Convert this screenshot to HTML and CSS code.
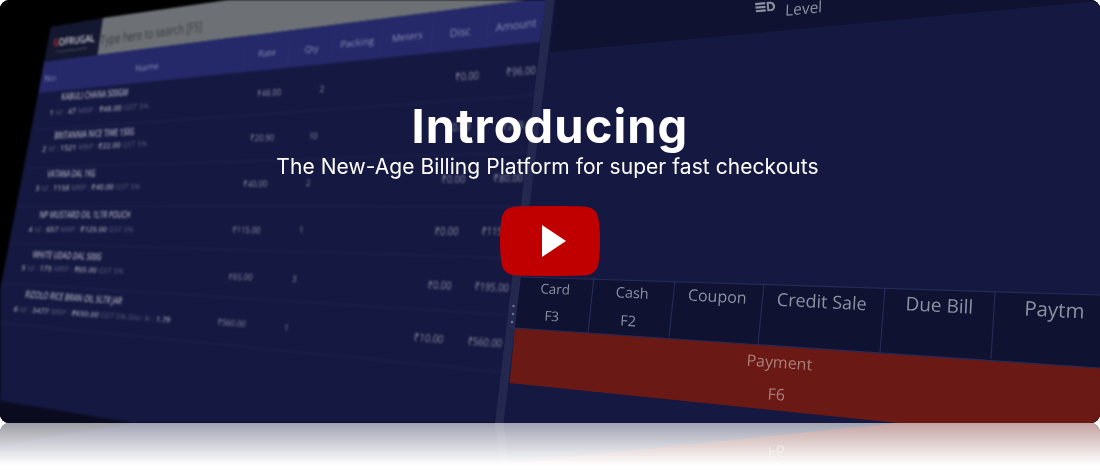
FILE: index.html
```html
<!DOCTYPE html>
<html lang="en">
<head>
<meta charset="utf-8">
<title>Introducing</title>
<link rel="stylesheet" href="styles.css">
</head>
<body>
<section class="banner">
  <svg class="shot" viewBox="0 0 1100 423" width="1100" height="423" aria-hidden="true">
    <rect class="f-black" width="1100" height="423"/>
    <polygon class="f-shadow" points="0,395 140,423 0,423"/>
    <g class="blur-left">
      <polygon class="f-panel" points="51,27 103,18 228,0 560,0 500,423 133,423 0,401 0,290"/>
      <polygon class="f-logo" points="51,27 103,18 97.5,55 44,62"/>
      <polygon class="f-grey" points="103,18 228,0 528,0 489,5 97.5,55"/>
      <polygon class="f-head" points="44,62 97.5,55 489,5 528,0 548,0 540,42 38.6,93"/>
      <g class="lines">
        <line x1="62" y1="62" x2="57" y2="88"/><line x1="246" y1="42" x2="242" y2="72"/>
        <line x1="291" y1="37" x2="287" y2="67"/><line x1="335" y1="31" x2="331" y2="62"/>
        <line x1="383" y1="25" x2="379" y2="57"/><line x1="434" y1="19" x2="430" y2="52"/>
        <line x1="490" y1="6" x2="486" y2="47"/>
      </g>
      <g class="lines rows">
        <line x1="35" y1="130" x2="537" y2="95"/><line x1="28" y1="168" x2="530" y2="152"/>
        <line x1="19" y1="206" x2="523" y2="207"/><line x1="9" y1="243" x2="509" y2="258"/>
        <line x1="1" y1="283" x2="509" y2="315"/><line x1="0" y1="323" x2="502" y2="372"/>
      </g>
      <text class="t logo-t" text-anchor="middle" transform="translate(74 44) rotate(-7) skewX(-6)" textLength="42" lengthAdjust="spacingAndGlyphs"><tspan class="logo-g">G</tspan>OFRUGAL</text>
      <text class="t logo-s" text-anchor="middle" transform="translate(72 51) rotate(-7)">Community Edition</text>
      <text class="t search" text-anchor="middle" transform="translate(151 38) rotate(-8) skewX(-10)" textLength="103" lengthAdjust="spacingAndGlyphs">Type here to search [F5]</text>
      <g class="head-labels">
        <text class="t hl hl-xs" text-anchor="middle" transform="translate(50 81) rotate(-7) skewX(-10)">No</text>
        <text class="t hl hl-xs" text-anchor="middle" transform="translate(147 70) rotate(-7) skewX(-10)">Name</text>
        <text class="t hl hl-xs" text-anchor="middle" transform="translate(267 56) rotate(-7) skewX(-10)">Rate</text>
        <text class="t hl hl-xs" text-anchor="middle" transform="translate(311.5 52) rotate(-7) skewX(-10)">Qty</text>
        <text class="t hl hl-s" text-anchor="middle" transform="translate(357 46) rotate(-7) skewX(-10)">Packing</text>
        <text class="t hl hl-s" text-anchor="middle" transform="translate(407 40) rotate(-7) skewX(-10)">Meters</text>
        <text class="t hl" text-anchor="middle" transform="translate(460 36) rotate(-7) skewX(-10)">Disc</text>
        <text class="t hl" text-anchor="middle" transform="translate(516 29) rotate(-7) skewX(-10)">Amount</text>
      </g>
      <g class="row-text">
        <text class="t name" text-anchor="middle" transform="translate(94.5 98) rotate(-4) skewX(-10)" textLength="67" lengthAdjust="spacingAndGlyphs">KABULI CHANA 500GM</text>
        <text class="t sub" text-anchor="middle" transform="translate(99 112) rotate(-4) skewX(-10)" textLength="100" lengthAdjust="spacingAndGlyphs">1   <tspan class="dim">Id :</tspan> 47  <tspan class="dim">MRP :</tspan> ₹48.00  <tspan class="dim">GST 5%</tspan></text>
        <text class="t val val-s" text-anchor="middle" transform="translate(269 96) rotate(-4) skewX(-6) scale(.85 1)">₹48.00</text>
        <text class="t val val-s" text-anchor="middle" transform="translate(322 92) rotate(-4) skewX(-6) scale(.85 1)">2</text>
        <text class="t val" text-anchor="middle" transform="translate(467 80) rotate(-4) skewX(-6) scale(.85 1)">₹0.00</text>
        <text class="t val" text-anchor="middle" transform="translate(521 75) rotate(-4) skewX(-6) scale(.85 1)">₹96.00</text>

        <text class="t name" text-anchor="middle" transform="translate(94 137) rotate(-3) skewX(-10)" textLength="80" lengthAdjust="spacingAndGlyphs">BRITANNIA NICE TIME 150G</text>
        <text class="t sub" text-anchor="middle" transform="translate(94.5 149) rotate(-3) skewX(-10)" textLength="105" lengthAdjust="spacingAndGlyphs">2   <tspan class="dim">Id :</tspan> 1521  <tspan class="dim">MRP :</tspan> ₹22.00  <tspan class="dim">GST 5%</tspan></text>
        <text class="t val val-s" text-anchor="middle" transform="translate(262 141) rotate(-2) skewX(-6) scale(.85 1)">₹20.90</text>
        <text class="t val val-s" text-anchor="middle" transform="translate(313 139) rotate(-2) skewX(-6) scale(.85 1)">10</text>
        <text class="t val" text-anchor="middle" transform="translate(458 131) rotate(-2) skewX(-6) scale(.85 1)">₹0.00</text>
        <text class="t val" text-anchor="middle" transform="translate(519 129) rotate(-2) skewX(-6) scale(.85 1)">₹209.00</text>

        <text class="t name" text-anchor="middle" transform="translate(71 177) rotate(-1) skewX(-10)" textLength="48" lengthAdjust="spacingAndGlyphs">VATANA DAL 1KG</text>
        <text class="t sub" text-anchor="middle" transform="translate(87.5 190) rotate(-1) skewX(-10)" textLength="105" lengthAdjust="spacingAndGlyphs">3   <tspan class="dim">Id :</tspan> 1158  <tspan class="dim">MRP :</tspan> ₹40.00  <tspan class="dim">GST 5%</tspan></text>
        <text class="t val val-s" text-anchor="middle" transform="translate(255 187) rotate(-1) skewX(-6) scale(.85 1)">₹40.00</text>
        <text class="t val val-s" text-anchor="middle" transform="translate(308 186) rotate(-1) skewX(-6) scale(.85 1)">2</text>
        <text class="t val" text-anchor="middle" transform="translate(453 183) rotate(-1) skewX(-6) scale(.85 1)">₹0.00</text>
        <text class="t val" text-anchor="middle" transform="translate(508 182) rotate(-1) skewX(-6) scale(.85 1)">₹80.00</text>

        <text class="t name" text-anchor="middle" transform="translate(84.5 218) rotate(0) skewX(-10)" textLength="91" lengthAdjust="spacingAndGlyphs">NP MUSTARD OIL 1LTR POUCH</text>
        <text class="t sub" text-anchor="middle" transform="translate(80.5 232) rotate(0) skewX(-10)" textLength="105" lengthAdjust="spacingAndGlyphs">4   <tspan class="dim">Id :</tspan> 657  <tspan class="dim">MRP :</tspan> ₹125.00  <tspan class="dim">GST 5%</tspan></text>
        <text class="t val val-s" text-anchor="middle" transform="translate(246 233) rotate(1) skewX(-6) scale(.85 1)">₹115.00</text>
        <text class="t val val-s" text-anchor="middle" transform="translate(301 233) rotate(1) skewX(-6) scale(.85 1)">1</text>
        <text class="t val" text-anchor="middle" transform="translate(446 235) rotate(1) skewX(-6) scale(.85 1)">₹0.00</text>
        <text class="t val" text-anchor="middle" transform="translate(498 235) rotate(1) skewX(-6) scale(.85 1)">₹115.00</text>

        <text class="t name" text-anchor="middle" transform="translate(66.5 259) rotate(2) skewX(-10)" textLength="69" lengthAdjust="spacingAndGlyphs">WHITE UDAD DAL 500G</text>
        <text class="t sub" text-anchor="middle" transform="translate(72 272) rotate(2) skewX(-10)" textLength="102" lengthAdjust="spacingAndGlyphs">5   <tspan class="dim">Id :</tspan> 175  <tspan class="dim">MRP :</tspan> ₹65.00  <tspan class="dim">GST 5%</tspan></text>
        <text class="t val val-s" text-anchor="middle" transform="translate(240 280) rotate(2) skewX(-6) scale(.85 1)">₹65.00</text>
        <text class="t val val-s" text-anchor="middle" transform="translate(294 282) rotate(2) skewX(-6) scale(.85 1)">3</text>
        <text class="t val" text-anchor="middle" transform="translate(439 289) rotate(2) skewX(-6) scale(.85 1)">₹0.00</text>
        <text class="t val" text-anchor="middle" transform="translate(491 291) rotate(2) skewX(-6) scale(.85 1)">₹195.00</text>

        <text class="t name" text-anchor="middle" transform="translate(73 301) rotate(4) skewX(-10)" textLength="97" lengthAdjust="spacingAndGlyphs">RIZOLO RICE BRAN OIL 5LTR JAR</text>
        <text class="t sub" text-anchor="middle" transform="translate(91.5 317) rotate(4) skewX(-10)" textLength="157" lengthAdjust="spacingAndGlyphs">6   <tspan class="dim">Id :</tspan> 3477  <tspan class="dim">MRP :</tspan> ₹650.00  <tspan class="dim">GST 5%  Disc  % :</tspan> 1.79</text>
        <text class="t val val-s" text-anchor="middle" transform="translate(231 326) rotate(4) skewX(-6) scale(.85 1)">₹560.00</text>
        <text class="t val val-s" text-anchor="middle" transform="translate(286 331) rotate(4) skewX(-6) scale(.85 1)">1</text>
        <text class="t val" text-anchor="middle" transform="translate(428 342) rotate(4) skewX(-6) scale(.85 1)">₹10.00</text>
        <text class="t val" text-anchor="middle" transform="translate(484 346) rotate(4) skewX(-6) scale(.85 1)">₹560.00</text>
      </g>
    </g>
    <g class="blur-right">
      <polygon class="f-right" points="552,0 1100,0 1100,423 500,423"/>
      <polygon class="f-dark" points="550,52 1087,2 1100,2 1100,0 556,0"/>
      <polygon class="f-strip" points="545.4,0 554.4,0 503.5,423 495,423"/>
      <g class="dots"><circle cx="513.5" cy="306" r="1.3"/><circle cx="513" cy="314" r="1.3"/><circle cx="512" cy="322" r="1.3"/></g>
      <polygon class="f-dark" points="521,277 1100,295 1100,368 515,328"/>
      <polygon class="f-red" points="515,328 1100,368 1100,423 898,423 509.5,383"/>
      <g class="lines bt">
        <line x1="521" y1="277" x2="1100" y2="295"/><line x1="515" y1="328" x2="1100" y2="368"/>
        <line x1="594" y1="277" x2="588" y2="333"/><line x1="675" y1="281" x2="669" y2="337"/>
        <line x1="764" y1="283" x2="758" y2="344"/><line x1="885" y1="287" x2="880" y2="352"/>
        <line x1="995" y1="292" x2="991" y2="359"/>
      </g>
      <g class="level-icon" transform="translate(755 2) rotate(-5)">
        <rect x="0" y="1" width="10" height="2.2"/><rect x="0" y="4.6" width="10" height="2.2"/><rect x="0" y="8.2" width="10" height="2.2"/>
        <path d="M11.5 1h3.500a4.700 4.700 0 0 1 0 9.400h-3.500zM13.500 3v5.500h1.200a2.700 2.700 0 0 0 0-5.500z" fill-rule="evenodd"/>
      </g>
      <text class="t bt-t level" text-anchor="middle" transform="translate(803.5 14) rotate(-6) skewX(-8)">Level</text>
      <text class="t bt-t s14" text-anchor="middle" transform="translate(555 294) rotate(3)">Card</text>
      <text class="t bt-t s14" text-anchor="middle" transform="translate(551.5 321) rotate(3)">F3</text>
      <text class="t bt-t s15" text-anchor="middle" transform="translate(632 298) rotate(3)">Cash</text>
      <text class="t bt-t s15" text-anchor="middle" transform="translate(628 326) rotate(3)">F2</text>
      <text class="t bt-t s16" text-anchor="middle" transform="translate(717 302) rotate(3)">Coupon</text>
      <text class="t bt-t s18" text-anchor="middle" transform="translate(821.5 308) rotate(3)">Credit Sale</text>
      <text class="t bt-t s19" text-anchor="middle" transform="translate(939 312) rotate(3)">Due Bill</text>
      <text class="t bt-t s20" text-anchor="middle" transform="translate(1054 317) rotate(3)">Paytm</text>
      <text class="t red-t" text-anchor="middle" transform="translate(779 368) rotate(4)">Payment</text>
      <text class="t red-t" text-anchor="middle" transform="translate(776 400) rotate(4)">F6</text>
    </g>
  </svg>
  <div class="hero">
    <h1 class="title">Introducing</h1>
    <p class="tagline">The New-Age Billing Platform for super fast checkouts</p>
    <svg class="play" viewBox="0 0 100 70" width="100" height="70" role="img" aria-label="Play">
      <path class="play-bg" d="M17 0.5C35 -0.2 65 -0.2 83 0.5C93 1 97 5 98.5 13C100.5 26 100.5 44 98.5 57C97 65 93 69 83 69.5C65 70.2 35 70.2 17 69.5C7 69 3 65 1.5 57C-0.5 44 -0.5 26 1.5 13C3 5 7 1 17 0.5Z"/>
      <polygon class="play-tri" points="42,19 66,35 42,51"/>
    </svg>
  </div>
</section>
</body>
</html>
```
FILE: styles.css
```css
html { overflow: hidden; background: #fff; }
body { margin: 0; min-height: 474px; background: #fff; }
.banner {
  width: 1100px;
  height: 423px;
  display: grid;
  border-radius: 9px;
  overflow: hidden;
  background: #000;
  -webkit-box-reflect: below 0 linear-gradient(transparent 90%, rgba(0,0,0,.4));
}
.shot, .hero { grid-area: 1 / 1; }
.shot { display: block; }
.f-black { fill: #000; }
.f-shadow { fill: #0b0b20; }
.f-panel { fill: #151840; }
.f-logo { fill: #141730; }
.f-grey { fill: #6d7176; }
.f-head { fill: #25296a; }
.f-right { fill: #151840; }
.f-dark { fill: #0f1230; }
.f-strip { fill: #24284f; }
.f-red { fill: #6a1914; }
.blur-left { filter: blur(.8px); }
.blur-right { filter: blur(.6px); }
.lines line { stroke: #2a2e70; stroke-width: 1; }
.rows line { stroke: #22264e; }
.bt line { stroke: #252a58; stroke-width: 1.2; }
.dots circle { fill: #6c7090; }
.t { font-family: "Open Sans", "Liberation Sans", sans-serif; }
.logo-t { font-size: 10px; fill: #d0d2d8; font-weight: 600; }
.logo-g { fill: #c03030; }
.logo-s { font-size: 3.5px; fill: #6a6c85; }
.search { font-size: 13px; fill: #36393e; }
.hl { font-size: 11px; fill: #8c8fb2; }
.hl-s { font-size: 9.5px; }
.hl-xs { font-size: 8.5px; }
.name { font-size: 10px; font-weight: 600; fill: #a8aabc; }
.sub { font-size: 7.5px; font-weight: 600; fill: #9a9cb0; }
.dim { fill: #5c5f80; font-weight: 400; }
.val { font-size: 11px; fill: #8d90a4; }
.val-s { font-size: 9px; }
.bt-t { fill: #8d8fa3; }
.level { font-size: 15.5px; }
.s14 { font-size: 13.5px; }
.s15 { font-size: 14.5px; }
.s16 { font-size: 16px; }
.s18 { font-size: 18px; }
.s19 { font-size: 19px; }
.s20 { font-size: 20.5px; }
.red-t { font-size: 16px; fill: #ab7f7c; }
.level-icon { fill: #8d8fa3; }
.hero {
  display: flex;
  flex-direction: column;
  align-items: center;
  padding-top: 96px;
  color: #fff;
  font-family: Inter, "Open Sans", sans-serif;
}
.title {
  margin: 0;
  font-size: 47px;
  line-height: 60px;
  font-weight: 700;
  letter-spacing: 1.1px;
}
.tagline {
  margin: -1px 5px 0 0;
  font-size: 21px;
  line-height: 24px;
  font-weight: 400;
  letter-spacing: .06px;
}
.play { display: block; margin-top: 27px; }
.play-bg { fill: #c00000; }
.play-tri { fill: #fff; }
```
